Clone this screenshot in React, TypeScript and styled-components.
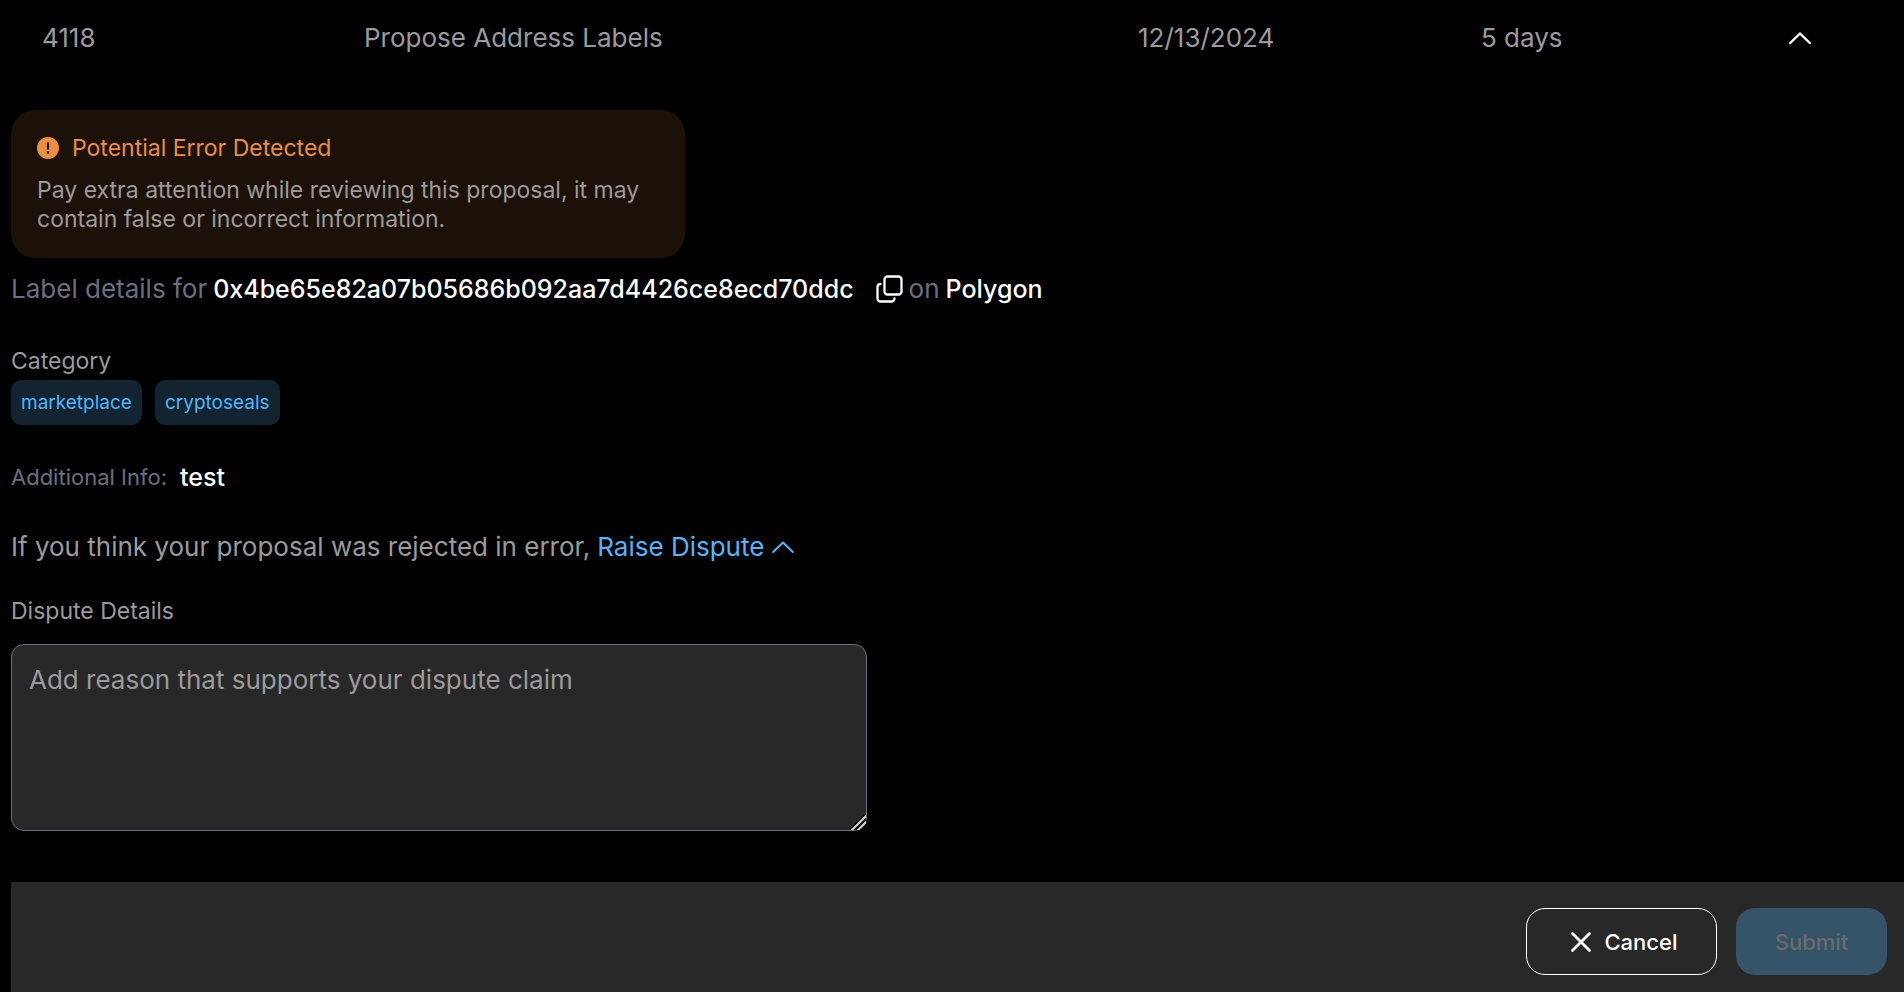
import React from "react";
import styled, { createGlobalStyle } from "styled-components";

const Global = createGlobalStyle`
  *, *::before, *::after { box-sizing: border-box; }
  body { margin: 0; background: #000; color: #9b9b9b; font-family: Inter, "Liberation Sans", sans-serif; font-size: 26px; line-height: 36px; }
  button, textarea { font: inherit; }
`;

const Page = styled.main`
  display: flex;
  flex-direction: column;
`;

const Summary = styled.header`
  display: grid;
  grid-template-columns: 322fr 774fr 343fr 308fr 115fr;
  align-items: center;
  height: 76px;
  padding-left: 42px;
`;

const PlainButton = styled.button<{ $accent?: boolean }>`
  display: inline-flex;
  align-items: center;
  gap: 8px;
  padding: 0;
  border: 0;
  background: none;
  color: ${(p) => (p.$accent ? "#52b6ff" : "#fff")};
  cursor: pointer;
`;

const Details = styled.section`
  display: flex;
  flex-direction: column;
  align-items: flex-start;
  padding: 34px 11px 51px;
`;

const Alert = styled.div`
  width: 100%;
  max-width: 674px;
  padding: 20px 26px 24px;
  border-radius: 24px;
  background: #1b1108;
  font-size: 23px;
  line-height: 29px;
`;

const AlertTitle = styled.h2`
  display: flex;
  align-items: center;
  gap: 13px;
  margin: 0 0 10px;
  color: #ec8e3c;
  font: inherit;
  line-height: 36px;
`;

const Text = styled.p`
  margin: 0;
`;

const Subject = styled.div`
  display: flex;
  align-items: center;
  gap: 6px;
  margin-top: 13px;
  color: #6b7080;
`;

const Address = styled.span`
  display: flex;
  align-items: center;
  gap: 22px;
`;

const Strong = styled.strong`
  color: #fff;
  font-size: 25px;
  font-weight: 500;
`;

const Label = styled.label`
  font-size: 23px;
`;

const Caption = styled.h3`
  margin: 36px 0 1px;
  font-size: 23px;
  font-weight: 400;
`;

const Tags = styled.ul`
  display: flex;
  gap: 13px;
  margin: 0;
  padding: 0;
  list-style: none;
`;

const Tag = styled.li`
  padding: 4px 10px;
  border-radius: 10px;
  background: #122430;
  color: #52b6ff;
  font-size: 19px;
  line-height: 37px;
`;

const Info = styled.div`
  display: flex;
  align-items: center;
  gap: 13px;
  margin-top: 34px;
  color: #6b7080;
`;

const Small = styled.span`
  font-size: 22px;
`;

const Dispute = styled.div`
  display: flex;
  gap: 7px;
  margin: 34px 0 28px;
`;

const Reason = styled.textarea`
  width: 100%;
  max-width: 856px;
  height: 187px;
  margin-top: 15px;
  padding: 17px;
  border: 1px solid #6b7080;
  border-radius: 13px;
  background: #282828;
  color: #fff;
  &::placeholder { color: #9b9b9b; opacity: 1; }
  &::-webkit-resizer {
    background: linear-gradient(135deg, transparent 43%, #111 43% 47%, #c8c8c8 47% 57%, #111 57% 68%, #c8c8c8 68% 78%, transparent 78%);
  }
`;

const Footer = styled.footer`
  display: flex;
  justify-content: flex-end;
  gap: 19px;
  margin-left: 11px;
  padding: 26px 17px 17px;
  background: #282828;
`;

const Action = styled.button<{ $filled?: boolean }>`
  display: flex;
  align-items: center;
  justify-content: center;
  gap: 13px;
  width: ${(p) => (p.$filled ? 151 : 191)}px;
  height: 67px;
  padding: ${(p) => (p.$filled ? "0" : "0 0 0 6px")};
  border: ${(p) => (p.$filled ? "0" : "1px solid #fff")};
  border-radius: 19px;
  background: ${(p) => (p.$filled ? "#365469" : "transparent")};
  color: ${(p) => (p.$filled ? "#6b6b6b" : "#fff")};
  font-size: 22px;
  font-weight: 500;
`;

const Chevron = ({ stroke }: { stroke: number }) => (
  <svg width="22" height="14" viewBox="0 0 22 14" fill="none" stroke="currentColor" strokeWidth={stroke} strokeLinecap="round" strokeLinejoin="round" aria-hidden="true">
    <path d="M1.2 12 11 2.5 20.8 12" />
  </svg>
);

export default function App() {
  return (
    <Page>
      <Global />
      <Summary>
        <span>4118</span>
        <span>Propose Address Labels</span>
        <span>12/13/2024</span>
        <span>5 days</span>
        <PlainButton aria-label="Collapse proposal">
          <Chevron stroke={2.4} />
        </PlainButton>
      </Summary>
      <Details>
        <Alert role="alert">
          <AlertTitle>
            <svg width="22" height="22" viewBox="0 0 22 22" aria-hidden="true">
              <circle cx="11" cy="11" r="11" fill="currentColor" />
              <path d="M11 5.500v7" stroke="#1b1108" strokeWidth="2.2" />
              <path d="M11 14.2v2.4" stroke="#1b1108" strokeWidth="2.2" />
            </svg>
            Potential Error Detected
          </AlertTitle>
          <Text>Pay extra attention while reviewing this proposal, it may contain false or incorrect information.</Text>
        </Alert>
        <Subject>
          <span>Label details for</span>
          <Address>
            <Strong>0x4be65e82a07b05686b092aa7d4426ce8ecd70ddc</Strong>
            <PlainButton aria-label="Copy address">
              <svg width="27" height="28" viewBox="0 0 27 28" fill="none" stroke="currentColor" strokeWidth="2.3" strokeLinecap="round" aria-hidden="true">
                <rect x="8.5" y="1.5" width="17" height="18" rx="3" />
                <path d="M4.5 9a3 3 0 0 0-3 3v11.500a3 3 0 0 0 3 3h11a3 3 0 0 0 3-3" />
              </svg>
            </PlainButton>
          </Address>
          <span>on</span>
          <Strong>Polygon</Strong>
        </Subject>
        <Caption>Category</Caption>
        <Tags>
          <Tag>marketplace</Tag>
          <Tag>cryptoseals</Tag>
        </Tags>
        <Info>
          <Small>Additional Info:</Small>
          <Strong>test</Strong>
        </Info>
        <Dispute>
          <span>If you think your proposal was rejected in error,</span>
          <PlainButton $accent aria-expanded="true">
            Raise Dispute
            <Chevron stroke={2} />
          </PlainButton>
        </Dispute>
        <Label htmlFor="reason">Dispute Details</Label>
        <Reason id="reason" placeholder="Add reason that supports your dispute claim" />
      </Details>
      <Footer>
        <Action type="button">
          <svg width="20" height="20" viewBox="0 0 20 20" stroke="currentColor" strokeWidth="2.8" strokeLinecap="round" aria-hidden="true">
            <path d="m1.5 1.500 17 17m0-17-17 17" />
          </svg>
          Cancel
        </Action>
        <Action type="submit" $filled disabled>
          Submit
        </Action>
      </Footer>
    </Page>
  );
}
